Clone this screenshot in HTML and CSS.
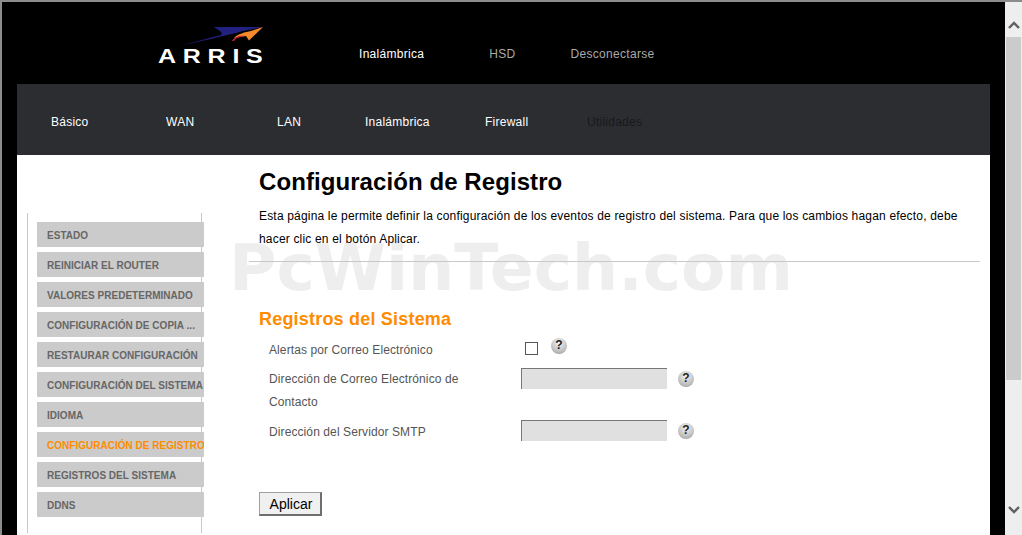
FILE: index.html
```html
<!DOCTYPE html>
<html lang="es">
<head>
  <meta charset="UTF-8">
  <meta name="viewport" content="width=device-width, initial-scale=1.0">
  <title>Configuración de Registro</title>
  <link rel="stylesheet" href="styles.css">
</head>
<body>
  <div class="frame">
    <div class="page">
      <header class="top">
        <div class="logo">
          <svg class="swoosh" width="106" height="20" viewBox="0 0 106 20">
            <path d="M0 19 L36 9.5 C39 8.5 40 7 36 4.5 L31 1 L80 1 L60 5 L53 7 C40 10 20 15 0 19Z" fill="#23217f"/>
            <path d="M80 1 L66 14.5 L63 10 L51 12 C55 8 62 6 68 5Z" fill="#f58a2c"/>
            <path d="M49 15 C51 11 57 9 62 10 C56 11 53 12 51 15Z" fill="#c8202f"/>
          </svg>
          <span class="wordmark">ARRIS</span>
        </div>
        <nav class="top-nav">
          <a class="top-link current">Inalámbrica</a>
          <a class="top-link">HSD</a>
          <a class="top-link">Desconectarse</a>
        </nav>
      </header>

      <nav class="main-nav">
        <a class="tab tab-basico">Básico</a>
        <a class="tab tab-wan">WAN</a>
        <a class="tab tab-lan">LAN</a>
        <a class="tab tab-inal">Inalámbrica</a>
        <a class="tab tab-fire">Firewall</a>
        <a class="tab tab-util">Utilidades</a>
      </nav>

      <div class="body">
        <div class="watermark">PcWinTech.com</div>

        <aside class="side">
          <a class="side-item">Estado</a>
          <a class="side-item">Reiniciar el router</a>
          <a class="side-item">Valores predeterminado</a>
          <a class="side-item">Configuración de copia ...</a>
          <a class="side-item">Restaurar configuración</a>
          <a class="side-item">Configuración del sistema</a>
          <a class="side-item">Idioma</a>
          <a class="side-item active">Configuración de registro</a>
          <a class="side-item">Registros del sistema</a>
          <a class="side-item">DDNS</a>
        </aside>

        <main class="content">
          <h1>Configuración de Registro</h1>
          <p class="intro">Esta página le permite definir la configuración de los eventos de registro del sistema. Para que los cambios hagan efecto, debe hacer clic en el botón Aplicar.</p>
          <hr class="rule">
          <h2>Registros del Sistema</h2>

          <form class="log-form">
            <div class="row row-check">
              <label class="field-label" for="alerts">Alertas por Correo Electrónico</label>
              <input class="check" type="checkbox" id="alerts">
              <span class="help">?</span>
            </div>
            <div class="row row-mail">
              <label class="field-label" for="mail">Dirección de Correo Electrónico de Contacto</label>
              <input class="text-in" type="text" id="mail" disabled>
              <span class="help">?</span>
            </div>
            <div class="row row-smtp">
              <label class="field-label" for="smtp">Dirección del Servidor SMTP</label>
              <input class="text-in" type="text" id="smtp" disabled>
              <span class="help">?</span>
            </div>
            <button class="apply" type="button">Aplicar</button>
          </form>
        </main>
      </div>
    </div>

    <div class="scrollbar">
      <svg width="12" height="8" viewBox="0 0 12 8"><path d="M1 7 L6 2 L11 7" fill="none" stroke="#606060" stroke-width="2.4"/></svg>
      <div class="thumb"></div>
      <svg class="arrow-down" width="12" height="8" viewBox="0 0 12 8"><path d="M1 1 L6 6 L11 1" fill="none" stroke="#606060" stroke-width="2.4"/></svg>
    </div>
  </div>
</body>
</html>
```

FILE: styles.css
```css
html, body {
  margin: 0;
  height: 100%;
  overflow: hidden;
}

body {
  font-family: "Liberation Sans", Arial, sans-serif;
  background: #000;
}

.frame {
  display: flex;
  height: 535px;
  box-sizing: border-box;
  border-top: 2px solid #8c8c8c;
  border-left: 2px solid #8c8c8c;
}

.page {
  width: 1003px;
  padding: 0 15px;
  box-sizing: border-box;
  background: #000;
}

/* top black strip */
.top {
  display: flex;
  height: 82px;
  width: 973px;
}

.logo {
  position: relative;
  width: 342px;
  padding: 44px 0 0 141px;
  box-sizing: border-box;
}

.swoosh {
  position: absolute;
  left: 166px;
  top: 24px;
}

.wordmark {
  display: block;
  color: #fff;
  font-size: 20px;
  line-height: 20px;
  font-weight: bold;
  letter-spacing: 5.4px;
  transform: scaleX(1.25);
  transform-origin: left;
}

.top-nav {
  display: flex;
  padding-top: 45px;
  font-size: 12px;
  line-height: 14px;
  letter-spacing: 0.3px;
}

.top-link {
  color: #a9a9a9;
  margin-right: 55px;
}

.top-link.current {
  color: #fff;
  margin-right: 65px;
}

/* dark tab bar */
.main-nav {
  display: flex;
  align-items: center;
  height: 71px;
  padding-top: 4px;
  width: 973px;
  box-sizing: border-box;
  background: #2b2d31;
  font-size: 12px;
  letter-spacing: 0.25px;
}

.tab {
  color: #fff;
}

.tab-basico { margin-left: 34px; width: 115px; }
.tab-wan { width: 111px; }
.tab-lan { width: 88px; }
.tab-inal { width: 120px; }
.tab-fire { width: 102px; }
.tab-util { color: #18191b; }

/* white body */
.body {
  position: relative;
  display: flex;
  width: 973px;
  height: 380px;
  background: #fff;
}

.watermark {
  position: absolute;
  left: 212px;
  top: 85px;
  color: #eeeeee;
  font-family: "DejaVu Sans", sans-serif;
  font-size: 64.7px;
  line-height: 56px;
  font-weight: bold;
  white-space: nowrap;
}

.side {
  position: relative;
  display: flex;
  flex-direction: column;
  gap: 5px;
  flex: none;
  align-self: flex-start;
  width: 177px;
  height: 320px;
  margin: 58px -3px 0 10px;
  padding: 9px 0 0 9px;
  box-sizing: border-box;
  border-left: 1px solid #c8c8c8;
  background: linear-gradient(#c8c8c8, #c8c8c8) 173px 0 / 1px 100% no-repeat;
}

.side-item {
  display: block;
  width: 157px;
  height: 25px;
  padding-left: 10px;
  overflow: hidden;
  background: #cbcbcb;
  color: #666;
  font-size: 10px;
  line-height: 27px;
  font-weight: bold;
  letter-spacing: 0.02px;
  text-transform: uppercase;
  white-space: nowrap;
}

.side-item.active {
  color: #ff8c00;
}

.content {
  position: relative;
  margin-left: 58px;
  width: 722px;
}

h1 {
  margin: 12px 0 0;
  font-size: 24px;
  line-height: 30px;
  letter-spacing: 0.08px;
  color: #000;
}

.intro {
  margin: 8px 0 0;
  width: 705px;
  font-size: 12px;
  line-height: 23px;
  letter-spacing: 0.18px;
  color: #000;
}

.rule {
  margin: 10px 0 0 -10px;
  width: 731px;
  height: 1px;
  border: 0;
  background: #c8c8c8;
}

h2 {
  margin: 46px 0 0;
  font-size: 18px;
  line-height: 22px;
  letter-spacing: 0.2px;
  color: #ff8c00;
}

.log-form {
  padding-left: 10px;
}

.row {
  display: flex;
  align-items: flex-start;
}

.field-label {
  width: 252px;
  font-size: 12px;
  line-height: 23px;
  letter-spacing: 0.1px;
  color: #555;
}

.row-check {
  height: 26px;
  margin-top: 9px;
}

.row-mail {
  height: 46px;
  margin-top: 4px;
}

.row-mail .field-label {
  width: 202px;
  margin-top: -1px;
  padding-right: 50px;
}

.row-smtp {
  margin-top: 6px;
}

.check {
  appearance: none;
  width: 13px;
  height: 13px;
  margin: 3px 0 0 4px;
  border: 1px solid #555;
  background: #fff;
}

.text-in {
  appearance: none;
  width: 146px;
  height: 21px;
  margin: -1px 0 0;
  padding: 0;
  box-sizing: border-box;
  border: 0;
  border-top: 1px solid #767676;
  border-left: 1px solid #767676;
  background: #e0e0e0;
}

.help {
  width: 16px;
  height: 16px;
  margin: 2px 0 0 11px;
  border-radius: 50%;
  background: radial-gradient(circle at 50% 30%, #f2f2f2, #bdbdbd 65%, #8f8f8f);
  color: #222;
  font-size: 12px;
  line-height: 15px;
  font-weight: bold;
  text-align: center;
}

.row-check .help {
  margin: -1px 0 0 13px;
}

.apply {
  display: block;
  width: 63px;
  height: 24px;
  margin: 48px 0 0 -10px;
  padding: 0 0 0 2px;
  border: 0;
  border-top: 1px solid #a0a0a0;
  border-left: 1px solid #a0a0a0;
  border-right: 2px solid #6e6e6e;
  border-bottom: 2px solid #6e6e6e;
  background: #f0f0f0;
  color: #000;
  font-family: "Liberation Sans", Arial, sans-serif;
  font-size: 14px;
}

/* fake window scrollbar */
.scrollbar {
  display: flex;
  flex-direction: column;
  align-items: center;
  width: 17px;
  background: #eeeeee;
  padding-top: 19px;
  box-sizing: border-box;
}

.thumb {
  width: 15px;
  height: 343px;
  margin-top: 8px;
  background: #cbcbcb;
}

.arrow-down {
  margin-top: 126px;
}
```
